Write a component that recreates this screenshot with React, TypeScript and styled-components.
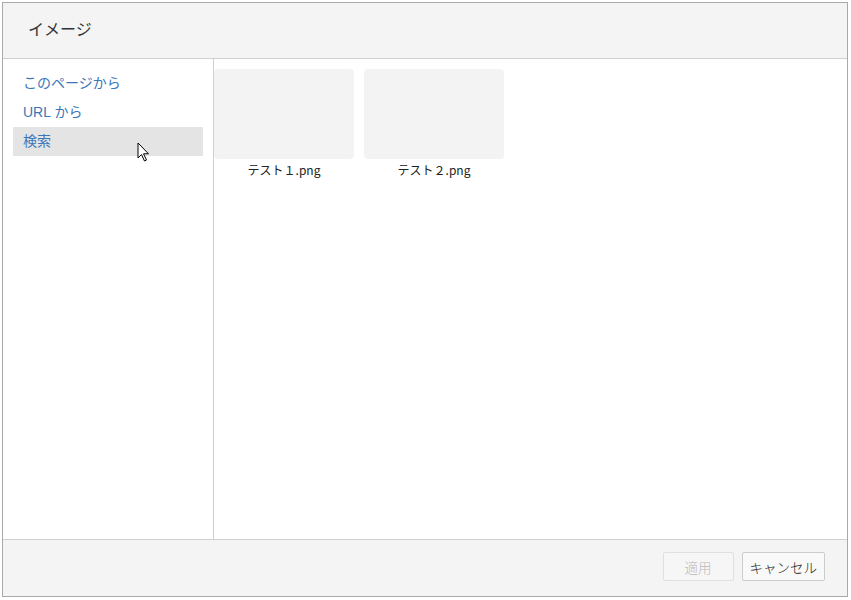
import styled, { createGlobalStyle } from "styled-components";

const GlobalStyle = createGlobalStyle`
    html, body {
        margin: 0;
        padding: 0;
        background: #ffffff;
    }
    body {
        font-family: "Liberation Sans", "Noto Sans CJK JP", sans-serif;
        color: #333;
    }
`

const Dialog = styled.div`
    position: relative;
    margin: 2px;
    width: 844px;
    height: 593px;
    border: 1px solid #a9a9a9;
    display: flex;
    flex-direction: column;
    background: #fff;
`

const Header = styled.div`
    height: 56px;
    box-sizing: border-box;
    flex: none;
    display: flex;
    align-items: center;
    padding: 0 0 5px 25px;
    background: #f4f4f4;
    border-bottom: 1px solid #cfcfcf;
    font-size: 16px;
    color: #333;
`

const Body = styled.div`
    flex: 1;
    display: flex;
    min-height: 0;
`

const Menu = styled.ul`
    list-style: none;
    margin: 0;
    width: 190px;
    padding: 10px 10px;
    border-right: 1px solid #cfcfcf;
`

const MenuItem = styled.li<{ $active?: boolean }>`
    height: 29px;
    line-height: 29px;
    padding-left: 10px;
    font-size: 14px;
    color: #3b77b9;
    background: ${p => (p.$active ? "#e4e4e4" : "transparent")};
`

const Grid = styled.div`
    flex: 1;
    display: flex;
    align-items: flex-start;
    gap: 10px;
    padding: 10px 0 0 0;
`

const Tile = styled.div`
    width: 140px;
    display: flex;
    flex-direction: column;
    align-items: center;
`

const Thumb = styled.div`
    width: 140px;
    height: 90px;
    border-radius: 4px;
    background: #f3f3f3;
`

const Caption = styled.div`
    margin-top: 2px;
    font-size: 12px;
    color: #222;
    font-family: "Noto Sans CJK JP", sans-serif;
`

const Footer = styled.div`
    height: 57px;
    box-sizing: border-box;
    flex: none;
    display: flex;
    align-items: center;
    justify-content: flex-end;
    gap: 8px;
    padding: 0 22px 3px 0;
    background: #f4f4f4;
    border-top: 1px solid #cfcfcf;
`

const Button = styled.button<{ $disabled?: boolean }>`
    height: 29px;
    padding: 0 ${p => (p.$disabled ? "21px" : "7px")};
    font-family: "Noto Sans CJK JP", sans-serif;
    font-size: 13.5px;
    font-weight: 300;
    border-radius: 2px;
    border: 1px solid ${p => (p.$disabled ? "#e0e0e0" : "#cccccc")};
    background: ${p => (p.$disabled ? "#f6f6f6" : "#f9f9f9")};
    color: ${p => (p.$disabled ? "#b9b9b9" : "#222")};
`

const Cursor = styled.svg`
    position: absolute;
    left: 134px;
    top: 139px;
`

const files = ["テスト１.png", "テスト２.png"];

export default function App() {
    return (
        <>
            <GlobalStyle />
            <Dialog>
                <Header>イメージ</Header>
                <Body>
                    <Menu>
                        <MenuItem>このページから</MenuItem>
                        <MenuItem>URL から</MenuItem>
                        <MenuItem $active>検索</MenuItem>
                    </Menu>
                    <Grid>
                        {files.map(name => (
                            <Tile key={name}>
                                <Thumb />
                                <Caption>{name}</Caption>
                            </Tile>
                        ))}
                    </Grid>
                </Body>
                <Footer>
                    <Button $disabled>適用</Button>
                    <Button>キャンセル</Button>
                </Footer>
                <Cursor width="14" height="22" viewBox="0 0 14 22">
                    <path d="M1 1 L1 16 L4.5 12.5 L7.5 19 L9.5 18 L6.5 11.8 L11.5 11.8 Z" fill="#fff" stroke="#000" strokeWidth="1" strokeLinejoin="miter" />
                </Cursor>
            </Dialog>
        </>
    );
}
